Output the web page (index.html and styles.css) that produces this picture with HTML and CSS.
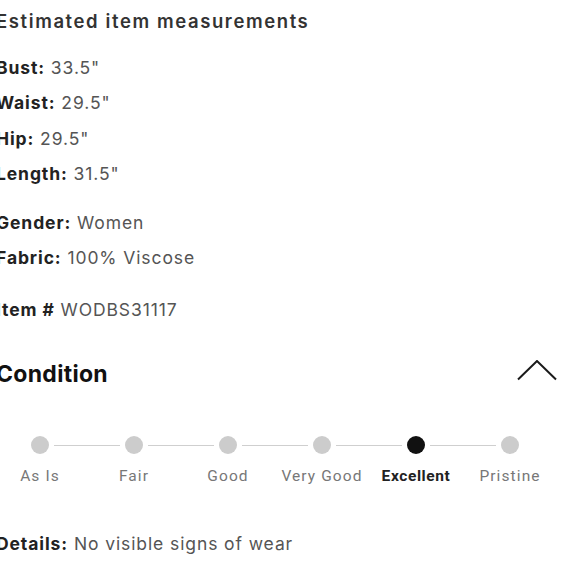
FILE: index.html
```html
<!DOCTYPE html>
<html lang="en">
<head>
<meta charset="utf-8">
<title>Item details</title>
<link rel="stylesheet" href="styles.css">
</head>
<body>
<div class="panel">
  <h2 class="title">Estimated item measurements</h2>
  <div class="group group-measure">
    <div class="row"><b>Bust:</b> 33.5"</div>
    <div class="row"><b>Waist:</b> 29.5"</div>
    <div class="row"><b>Hip:</b> 29.5"</div>
    <div class="row"><b>Length:</b> 31.5"</div>
  </div>
  <div class="group group-info">
    <div class="row"><b>Gender:</b> Women</div>
    <div class="row"><b>Fabric:</b> 100% Viscose</div>
  </div>
  <div class="group group-item">
    <div class="row"><b>Item #</b> WODBS31117</div>
  </div>

  <div class="cond-head">
    <h2 class="cond-title">Condition</h2>
    <svg class="chevron" width="40" height="22" viewBox="0 0 40 22" aria-hidden="true">
      <polyline points="1,19.5 20,1 39,19.5" fill="none" stroke="#1a1a1a" stroke-width="2"/>
    </svg>
  </div>

  <div class="stepper">
    <div class="dots">
      <span class="dot"></span><span class="line"></span>
      <span class="dot"></span><span class="line"></span>
      <span class="dot"></span><span class="line"></span>
      <span class="dot"></span><span class="line"></span>
      <span class="dot dot-active"></span><span class="line"></span>
      <span class="dot"></span>
    </div>
    <div class="labels">
      <span class="label">As Is</span>
      <span class="label">Fair</span>
      <span class="label">Good</span>
      <span class="label">Very Good</span>
      <span class="label label-active">Excellent</span>
      <span class="label">Pristine</span>
    </div>
  </div>

  <div class="details"><b>Details:</b> No visible signs of wear</div>
</div>
</body>
</html>
```

FILE: styles.css
```css
html, body {
  margin: 0;
  padding: 0;
  background: #ffffff;
}

body {
  font-family: Inter, "Liberation Sans", Arial, sans-serif;
  color: #555555;
}

.panel {
  margin-left: -4px;
  width: 561px;
  padding-top: 9px;
}

.title {
  margin: 0;
  font-size: 18.5px;
  line-height: 24px;
  font-weight: 600;
  letter-spacing: 1.6px;
  color: #333333;
}

.group {
  font-size: 17.5px;
  line-height: 35.3px;
  letter-spacing: 0.9px;
}

.row b {
  font-weight: 700;
  color: #222222;
}

.group-measure { margin-top: 17px; }
.group-info { margin-top: 14px; }
.group-item { margin-top: 16px; }

.cond-head {
  margin-top: 32px;
  display: flex;
  justify-content: space-between;
  align-items: center;
  height: 30px;
}

.cond-title {
  margin: 0;
  font-size: 23px;
  line-height: 30px;
  font-weight: 700;
  letter-spacing: 0.3px;
  color: #111111;
}

.chevron {
  display: block;
  margin-top: -6px;
}

.stepper {
  margin-top: 47px;
  margin-left: -3px;
  width: 564px;
}

.dots {
  display: flex;
  align-items: center;
  gap: 5px;
  padding: 0 38px;
}

.dot {
  width: 18px;
  height: 18px;
  border-radius: 50%;
  background: #cccccc;
  flex: none;
}

.dot-active {
  background: #111111;
}

.line {
  flex: 1;
  height: 1px;
  background: #cfcfcf;
}

.labels {
  margin-top: 12px;
  display: grid;
  grid-template-columns: repeat(6, 94px);
  font-family: Roboto, "Liberation Sans", Arial, sans-serif;
  font-size: 15.5px;
  line-height: 20px;
  letter-spacing: 1.1px;
  color: #777777;
}

.label {
  text-align: center;
  white-space: nowrap;
}

.label-active {
  font-weight: 700;
  color: #222222;
  letter-spacing: 0.6px;
}

.details {
  margin-top: 46px;
  font-size: 17.5px;
  line-height: 24px;
  letter-spacing: 0.9px;
}

.details b {
  font-weight: 700;
  color: #222222;
}
```
